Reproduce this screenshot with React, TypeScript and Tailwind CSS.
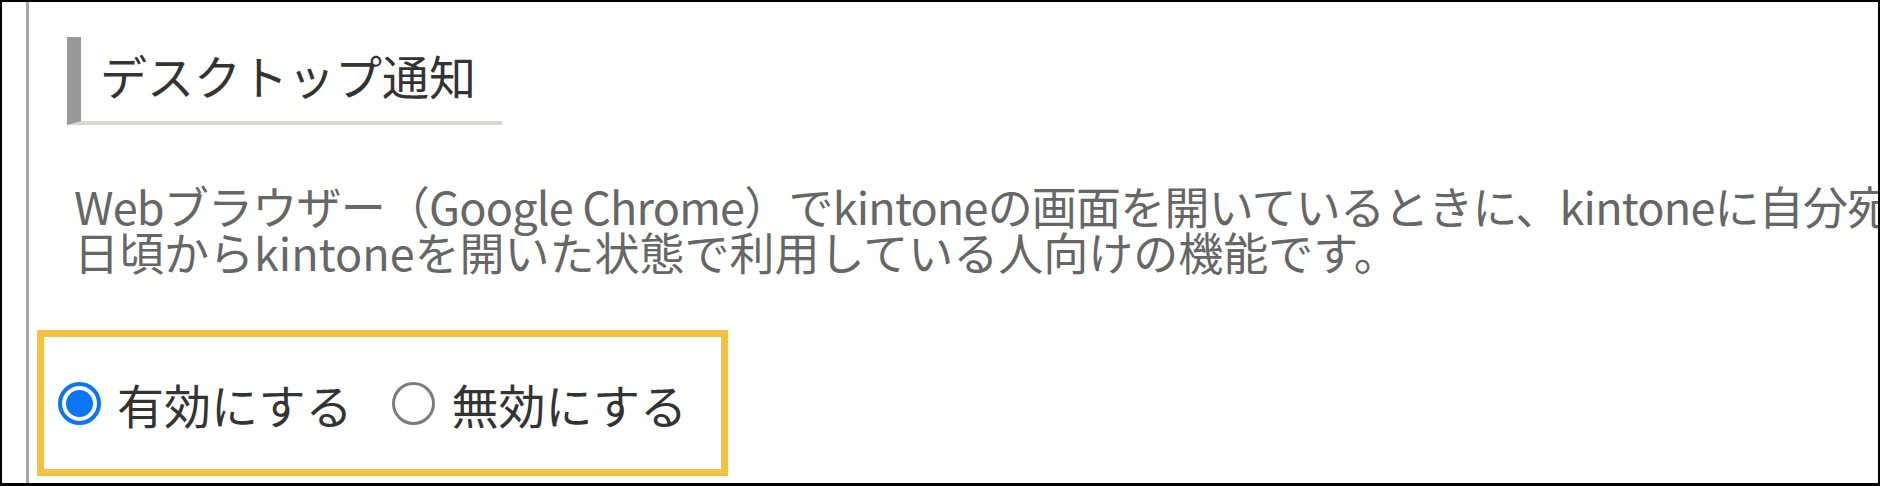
import React from "react";

const font = { fontFamily: '"Noto Sans CJK JP", "Noto Sans", sans-serif' };

function Radio({ checked }: { checked: boolean }) {
  if (checked) {
    return (
      <span className="flex h-[43px] w-[43px] shrink-0 items-center justify-center rounded-full border-[4px] border-[#0a75f7] bg-white">
        <span className="h-[27px] w-[27px] rounded-full bg-[#0a75f7]" />
      </span>
    );
  }
  return <span className="block h-[43px] w-[43px] shrink-0 rounded-full border-[3px] border-[#7b7b7b] bg-white" />;
}

export default function App() {
  return (
    <div
      className="box-border flex h-[486px] w-[1880px] overflow-hidden border-b-[3px] border-l-2 border-r-2 border-t-2 border-black bg-white pl-[24px]"
      style={font}
    >
      <div className="flex h-full flex-1 flex-col overflow-hidden border-l-[3px] border-[#a7a7a7]">
        <div className="ml-[38px] mt-[35px] flex h-[88px] w-[435px] shrink-0 items-center border-b-[4px] border-l-[14px] border-b-[#dad6d3] border-l-[#999999] pb-[10px] pl-[19px] text-[47px] leading-none text-[#333333]">
          デスクトップ通知
        </div>
        <div className="ml-[45px] mt-[58px] flex shrink-0 flex-col text-[45px] leading-[46px] text-[#666666]">
          <div className="whitespace-nowrap tracking-[-0.8px]">
            Webブラウザー（Google Chrome）でkintoneの画面を開いているときに、kintoneに自分宛ての通知が届くと、デスクトップに通知が表示されます。
          </div>
          <div className="whitespace-nowrap">日頃からkintoneを開いた状態で利用している人向けの機能です。</div>
        </div>
        <div className="ml-[8px] mt-[55px] flex h-[146px] w-[691px] shrink-0 items-center border-[7px] border-[#f6c142] pl-[14px] text-[47px] leading-none text-[#333333]">
          <label className="flex items-center gap-[16px]">
            <Radio checked />
            <span>有効にする</span>
          </label>
          <label className="ml-[40px] flex items-center gap-[16px]">
            <Radio checked={false} />
            <span>無効にする</span>
          </label>
        </div>
      </div>
    </div>
  );
}
